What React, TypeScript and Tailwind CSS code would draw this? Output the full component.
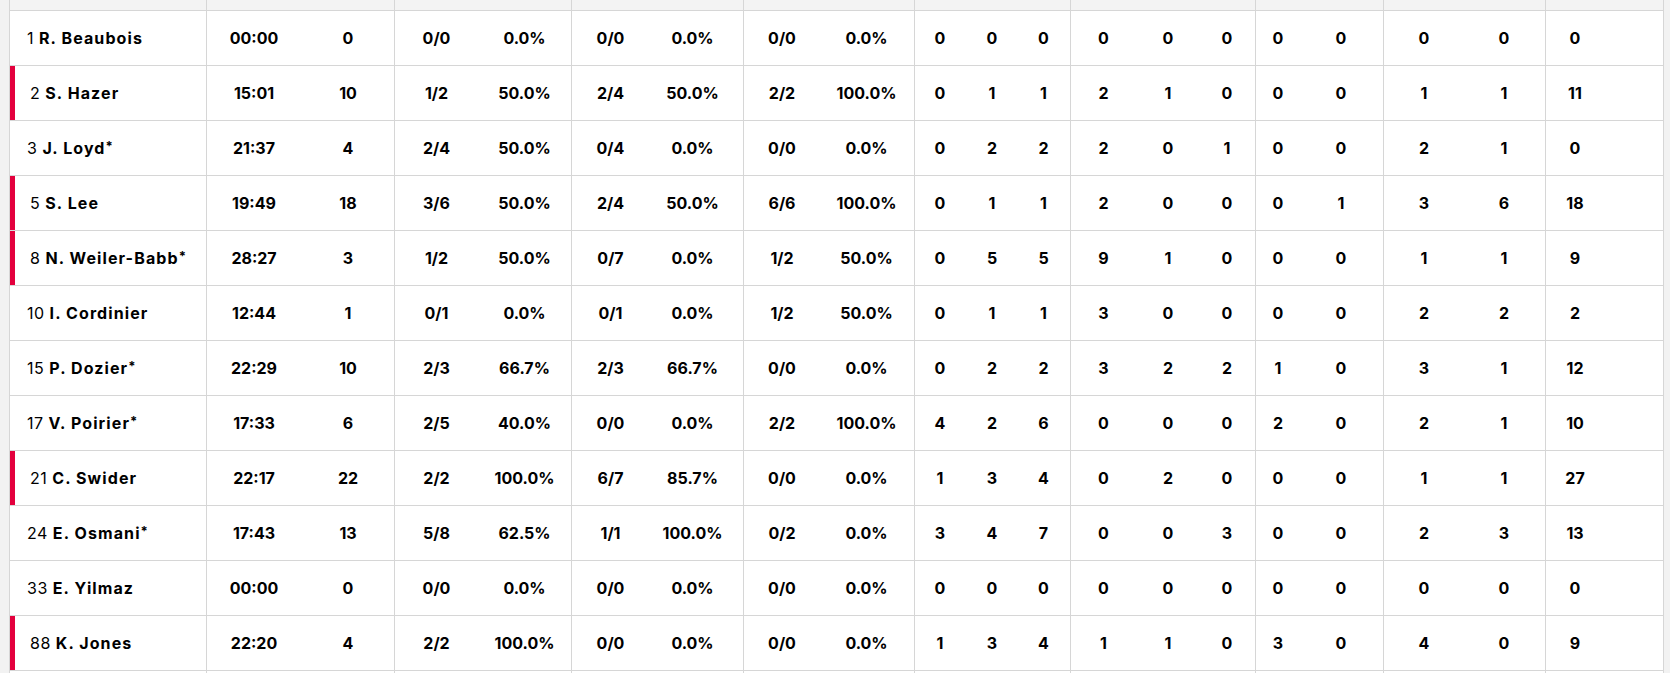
import React from 'react';

type Row = {
  num: string;
  name: string;
  starter?: boolean;
  on: boolean;
  g: string[][];
};

// widths of the value cells inside each bordered group (px), group width incl. right border
const groups: { w: number; cols: number[] }[] = [
  { w: 188, cols: [94, 94] },
  { w: 177, cols: [83, 93] },
  { w: 172, cols: [77, 87] },
  { w: 171, cols: [76, 93] },
  { w: 156, cols: [50, 54, 49] },
  { w: 185, cols: [65, 64, 54] },
  { w: 128, cols: [44, 82] },
  { w: 162, cols: [80, 80] },
  { w: 117, cols: [58] },
];

const rows: Row[] = [
  { num: '1', name: 'R. Beaubois', on: false, g: [['00:00', '0'], ['0/0', '0.0%'], ['0/0', '0.0%'], ['0/0', '0.0%'], ['0', '0', '0'], ['0', '0', '0'], ['0', '0'], ['0', '0'], ['0']] },
  { num: '2', name: 'S. Hazer', on: true, g: [['15:01', '10'], ['1/2', '50.0%'], ['2/4', '50.0%'], ['2/2', '100.0%'], ['0', '1', '1'], ['2', '1', '0'], ['0', '0'], ['1', '1'], ['11']] },
  { num: '3', name: 'J. Loyd', starter: true, on: false, g: [['21:37', '4'], ['2/4', '50.0%'], ['0/4', '0.0%'], ['0/0', '0.0%'], ['0', '2', '2'], ['2', '0', '1'], ['0', '0'], ['2', '1'], ['0']] },
  { num: '5', name: 'S. Lee', on: true, g: [['19:49', '18'], ['3/6', '50.0%'], ['2/4', '50.0%'], ['6/6', '100.0%'], ['0', '1', '1'], ['2', '0', '0'], ['0', '1'], ['3', '6'], ['18']] },
  { num: '8', name: 'N. Weiler-Babb', starter: true, on: true, g: [['28:27', '3'], ['1/2', '50.0%'], ['0/7', '0.0%'], ['1/2', '50.0%'], ['0', '5', '5'], ['9', '1', '0'], ['0', '0'], ['1', '1'], ['9']] },
  { num: '10', name: 'I. Cordinier', on: false, g: [['12:44', '1'], ['0/1', '0.0%'], ['0/1', '0.0%'], ['1/2', '50.0%'], ['0', '1', '1'], ['3', '0', '0'], ['0', '0'], ['2', '2'], ['2']] },
  { num: '15', name: 'P. Dozier', starter: true, on: false, g: [['22:29', '10'], ['2/3', '66.7%'], ['2/3', '66.7%'], ['0/0', '0.0%'], ['0', '2', '2'], ['3', '2', '2'], ['1', '0'], ['3', '1'], ['12']] },
  { num: '17', name: 'V. Poirier', starter: true, on: false, g: [['17:33', '6'], ['2/5', '40.0%'], ['0/0', '0.0%'], ['2/2', '100.0%'], ['4', '2', '6'], ['0', '0', '0'], ['2', '0'], ['2', '1'], ['10']] },
  { num: '21', name: 'C. Swider', on: true, g: [['22:17', '22'], ['2/2', '100.0%'], ['6/7', '85.7%'], ['0/0', '0.0%'], ['1', '3', '4'], ['0', '2', '0'], ['0', '0'], ['1', '1'], ['27']] },
  { num: '24', name: 'E. Osmani', starter: true, on: false, g: [['17:43', '13'], ['5/8', '62.5%'], ['1/1', '100.0%'], ['0/2', '0.0%'], ['3', '4', '7'], ['0', '0', '3'], ['0', '0'], ['2', '3'], ['13']] },
  { num: '33', name: 'E. Yilmaz', on: false, g: [['00:00', '0'], ['0/0', '0.0%'], ['0/0', '0.0%'], ['0/0', '0.0%'], ['0', '0', '0'], ['0', '0', '0'], ['0', '0'], ['0', '0'], ['0']] },
  { num: '88', name: 'K. Jones', on: true, g: [['22:20', '4'], ['2/2', '100.0%'], ['0/0', '0.0%'], ['0/0', '0.0%'], ['1', '3', '4'], ['1', '1', '0'], ['3', '0'], ['4', '0'], ['9']] },
];

const GroupCells: React.FC<{ values?: string[][]; height: string }> = ({ values, height }) => (
  <>
    {groups.map((grp, gi) => (
      <div
        key={gi}
        className={`flex items-center shrink-0 ${height} ${gi < groups.length - 1 ? 'border-r border-[#d6d6d6]' : ''}`}
        style={{ width: grp.w }}
      >
        {values &&
          grp.cols.map((cw, ci) => (
            <div key={ci} className="text-center shrink-0" style={{ width: cw }}>
              {values[gi][ci]}
            </div>
          ))}
      </div>
    ))}
  </>
);

const App: React.FC = () => {
  return (
    <div className="w-[1670px] h-[673px] overflow-hidden bg-[#f2f2f2] pl-[9px]">
      <div
        className="w-[1655px] border-x border-[#d6d6d6] bg-white text-black text-[16px]"
        style={{ fontFamily: 'Inter, "Liberation Sans", sans-serif' }}
      >
        {/* header band, scrolled mostly out of view */}
        <div className="flex bg-[#f3f3f3] border-b border-[#d6d6d6]">
          <div className="w-[197px] h-[10px] shrink-0 border-r border-[#d6d6d6]" />
          <GroupCells height="h-[10px]" />
        </div>

        {rows.map((r) => (
          <div key={r.num} className="flex border-b border-[#d6d6d6] font-bold">
            <div className="w-[197px] h-[54px] shrink-0 flex items-stretch border-r border-[#d6d6d6]">
              <div className={`w-[5px] shrink-0 ${r.on ? 'bg-[#e3003d]' : ''}`} />
              <div className={`flex items-center whitespace-nowrap ${r.on ? 'pl-[15px]' : 'pl-[12px]'}`}>
                <span className="font-normal tracking-[0.5px]">{r.num}</span>
                <span className="ml-[5px] tracking-[1.1px]">
                  {r.name}
                  {r.starter && <span className="text-[13px] align-[3px]">*</span>}
                </span>
              </div>
            </div>
            <GroupCells values={r.g} height="h-[54px]" />
          </div>
        ))}

        <div className="flex">
          <div className="w-[197px] h-[20px] shrink-0 border-r border-[#d6d6d6]" />
          <GroupCells height="h-[20px]" />
        </div>
      </div>
    </div>
  );
};

export default App;
